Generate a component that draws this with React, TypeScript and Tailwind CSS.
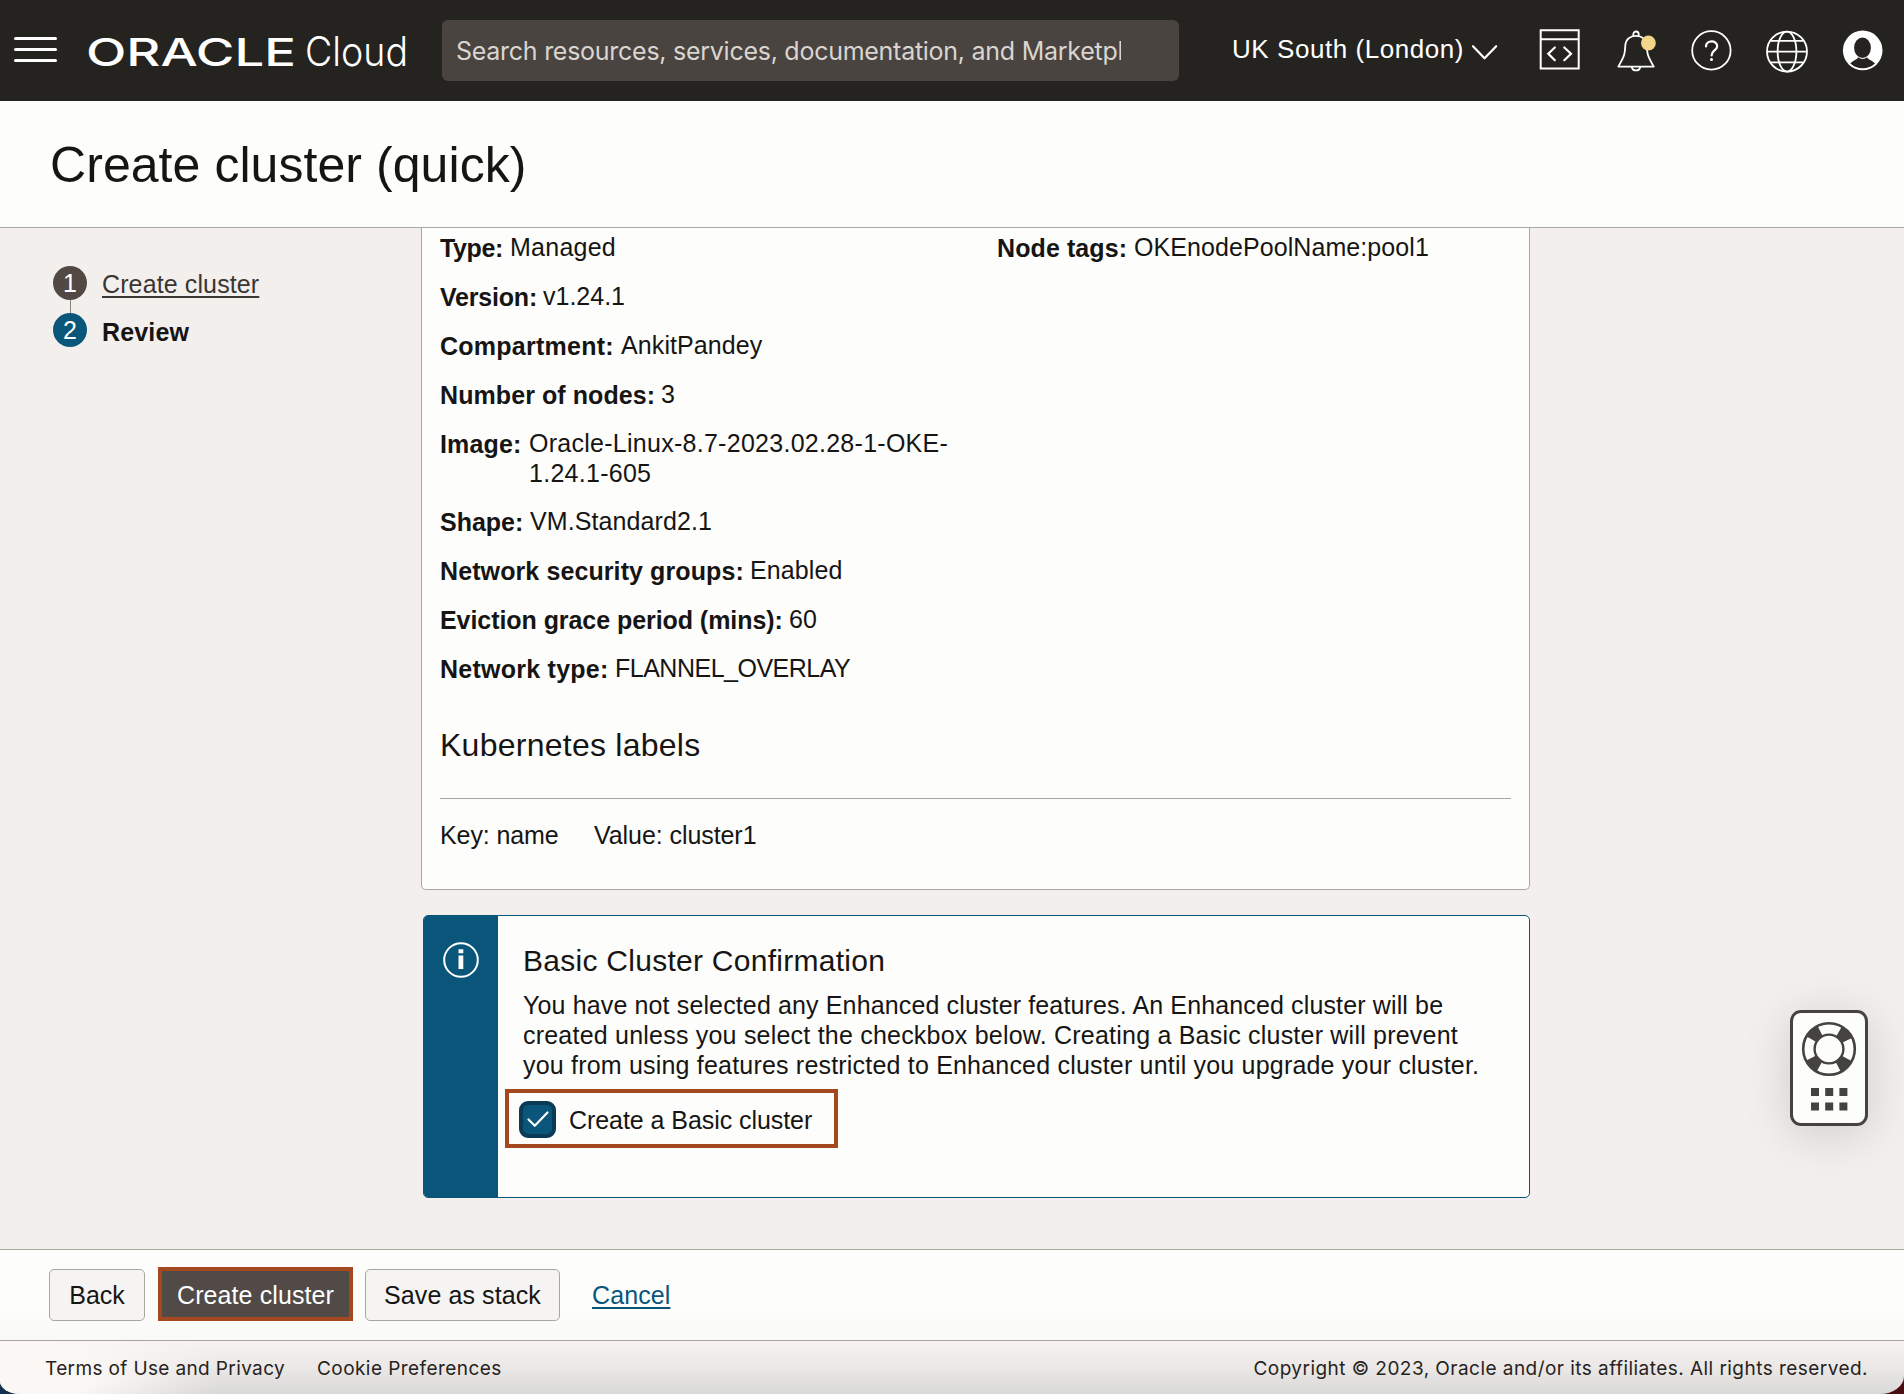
import React from 'react';

type Detail = {
  label: string;
  lines: string[];
  labelClass: string;
  valueClass: string;
};

const details: Detail[] = [
  { label: 'Type:', lines: ['Managed'], labelClass: 'w-[70px] tracking-[-0.4px]', valueClass: 'tracking-[0.25px]' },
  { label: 'Version:', lines: ['v1.24.1'], labelClass: 'w-[103px] tracking-[-0.2px]', valueClass: '' },
  { label: 'Compartment:', lines: ['AnkitPandey'], labelClass: 'w-[181px] tracking-[0.25px]', valueClass: 'tracking-[0.1px]' },
  { label: 'Number of nodes:', lines: ['3'], labelClass: 'w-[221px] tracking-[0.08px]', valueClass: '' },
  {
    label: 'Image:',
    lines: ['Oracle-Linux-8.7-2023.02.28-1-OKE-', '1.24.1-605'],
    labelClass: 'w-[89px] tracking-[0.15px]',
    valueClass: 'tracking-[0.27px]',
  },
  { label: 'Shape:', lines: ['VM.Standard2.1'], labelClass: 'w-[90px]', valueClass: 'tracking-[0.1px]' },
  { label: 'Network security groups:', lines: ['Enabled'], labelClass: 'w-[310px] tracking-[0.1px]', valueClass: 'tracking-[0.1px]' },
  { label: 'Eviction grace period (mins):', lines: ['60'], labelClass: 'w-[349px] tracking-[-0.06px]', valueClass: '' },
  { label: 'Network type:', lines: ['FLANNEL_OVERLAY'], labelClass: 'w-[175px] tracking-[0.25px]', valueClass: 'tracking-[-0.5px]' },
];

function DetailRow({ label, lines, labelClass, valueClass }: Detail) {
  return (
    <div className="mb-[18px] flex items-start whitespace-nowrap text-[25px] leading-[30px]">
      <span className={`shrink-0 pt-px font-bold ${labelClass}`}>{label}</span>
      <span className={valueClass}>
        {lines.map((line) => (
          <span key={line} className="block">
            {line}
          </span>
        ))}
      </span>
    </div>
  );
}

function Header() {
  return (
    <header className="flex h-[101px] shrink-0 items-start bg-[#24231f] text-white">
      <button className="ml-[14px] mt-[37px] flex h-[25px] w-[43px] flex-col justify-between" aria-label="Menu">
        <span className="h-[3px] w-full rounded-full bg-white" />
        <span className="h-[3px] w-full rounded-full bg-white" />
        <span className="h-[3px] w-full rounded-full bg-white" />
      </button>
      <svg className="ml-[29px] mt-[26px] h-[52px] w-[326px]" viewBox="86 26 326 52" fill="#fff">
        <text x="86" y="65.6" fontFamily="Inter, sans-serif" fontSize="38" fontWeight="500" textLength="210" lengthAdjust="spacingAndGlyphs">
          ORACLE
        </text>
        <text x="305" y="65.6" fontFamily="Inter, sans-serif" fontSize="40.5" fontWeight="300" textLength="103" lengthAdjust="spacingAndGlyphs">
          Cloud
        </text>
      </svg>
      <div className="ml-[30px] mt-5 flex h-[61px] w-[737px] items-center rounded-[6px] bg-[#494440] pl-[14px] pt-px">
        <span className="w-[665px] overflow-hidden whitespace-nowrap font-[Inter,sans-serif] text-[25px] leading-[30px] tracking-[-0.265px] text-[#d9d5d0]">
          Search resources, services, documentation, and Marketplace
        </span>
      </div>
      <div className="ml-[53px] mt-[34px] w-[233px] whitespace-nowrap text-[26px] leading-[30px] tracking-[0.55px]">UK South (London)</div>
      <svg className="ml-[3px] mt-[42px] h-5 w-[32px]" viewBox="1468 42 32 20" fill="none" stroke="#fff" strokeWidth="2.2" strokeLinecap="round" strokeLinejoin="round">
        <path d="M1473 46.2 1484.5 58.3 1496.2 46.2" />
      </svg>
      <div className="ml-9 mt-[26px] flex gap-7">
        <svg className="size-12" viewBox="1536 26 48 48" fill="none" stroke="#fff" strokeWidth="2">
          <path d="M1540.7 30.3h38v38.2h-38zM1540 39.3h39" />
          <path d="M1554.8 47.5 1548.3 53.7 1554.8 60.2M1564.3 47.5 1571 53.7 1564.3 60.2" strokeLinecap="round" strokeWidth="2.2" />
        </svg>
        <svg className="size-12" viewBox="1612 26 48 48" fill="none" stroke="#fff" strokeWidth="1.8" strokeLinejoin="round">
          <path d="M1636 35.8C1630 35.8 1625.6 39.6 1625.3 45.5C1625 53 1625 55.5 1618.3 66.6H1653.8C1647.2 55.5 1647 53 1646.8 45.5C1646.5 39.6 1642 35.8 1636 35.8Z" />
          <path d="M1633.3 36V34.2a2.7 2.7 0 0 1 5.4 0V36M1631.7 67a4.4 4.4 0 0 0 8.6 0" />
          <circle cx="1648.4" cy="43" r="7.4" fill="#f3d58a" stroke="none" />
        </svg>
        <svg className="-ml-px size-12" viewBox="1687 26 48 48" fill="none" stroke="#fff" strokeWidth="1.8" strokeLinecap="round">
          <circle cx="1711.4" cy="50.4" r="19.2" />
          <path d="M1706 46.5C1706 39.8 1717.2 39.8 1717.2 46.2C1717.2 50.3 1711.6 50.2 1711.6 55.5" strokeWidth="2.2" />
          <circle cx="1711.5" cy="59.5" r="1.5" fill="#fff" stroke="none" />
        </svg>
        <svg className="size-12" viewBox="1763 26 48 48" fill="none" stroke="#fff" strokeWidth="1.8">
          <circle cx="1787" cy="51.6" r="20" />
          <ellipse cx="1787" cy="51.6" rx="9.4" ry="20" />
          <path d="M1767 51.6h40M1770.5 40.9h33M1770.5 62.3h33" />
        </svg>
        <svg className="size-12" viewBox="1839 26 48 48">
          <circle cx="1862.7" cy="50.4" r="19.8" fill="#fff" />
          <ellipse cx="1862.5" cy="47.8" rx="8.4" ry="10.2" fill="#24231f" />
          <path d="M1850.4 63.6C1852.6 60.5 1856.6 60 1858.3 57.2C1861 59.5 1864.4 59.5 1867 57.2C1868.8 60 1872.7 60.5 1875 63.6A18.3 18.3 0 0 1 1850.4 63.6Z" fill="#24231f" />
        </svg>
      </div>
    </header>
  );
}

function Steps() {
  return (
    <nav className="flex w-[368px] shrink-0 gap-[15px] pt-[38px] text-[25px] leading-[30px]">
      <div className="flex w-[34px] flex-col items-center text-white">
        <span className="flex size-[34px] items-center justify-center rounded-full bg-[#524944]">1</span>
        <span className="h-[13px] w-px bg-[#8b8580]" />
        <span className="flex size-[34px] items-center justify-center rounded-full bg-[#0a557a]">2</span>
      </div>
      <div className="flex flex-col items-start gap-[18px] pt-[3px]">
        <a className="tracking-[0.12px] text-[#3a3632] underline decoration-2 underline-offset-[3px]">Create cluster</a>
        <span className="font-bold tracking-[0.15px]">Review</span>
      </div>
    </nav>
  );
}

function ReviewCard() {
  return (
    <section className="flex h-[662px] flex-col rounded-b-[5px] border border-t-0 border-[#aaa5a0] bg-[#fdfdfb] px-[18px] pt-1">
      <div className="flex">
        <div className="w-[557px] shrink-0">
          {details.map((row) => (
            <DetailRow key={row.label} {...row} />
          ))}
        </div>
        <DetailRow label="Node tags:" lines={['OKEnodePoolName:pool1']} labelClass="w-[137px] tracking-[0.1px]" valueClass="tracking-[0.08px]" />
      </div>
      <h2 className="mt-[23px] text-[32px] leading-10 tracking-[0.25px]">Kubernetes labels</h2>
      <div className="mt-[33px] border-t border-[#aaa5a0] pt-[21px]">
        <div className="flex text-[25px] leading-[30px]">
          <span className="w-[154px] tracking-[-0.1px]">Key: name</span>
          <span className="tracking-[-0.07px]">Value: cluster1</span>
        </div>
      </div>
    </section>
  );
}

function Confirmation() {
  return (
    <section className="ml-[2px] mt-[25px] flex h-[283px] overflow-hidden rounded-[5px] border border-[#0a557a] bg-[#fdfdfb]">
      <div className="flex w-[74px] shrink-0 justify-center bg-[#0a557a] pt-[26px]">
        <svg className="size-9" viewBox="0 0 36 36" fill="none">
          <circle cx="18" cy="18" r="16.8" stroke="#fff" strokeWidth="2" />
          <path d="M15.5 7.2h4.8v4h-4.8zM15.5 13.6h4.8v13.4h-4.8z" fill="#fff" />
        </svg>
      </div>
      <div className="flex flex-col items-start pl-[7px] pt-[27px]">
        <h2 className="pl-[18px] text-[30px] leading-9 tracking-[0.27px]">Basic Cluster Confirmation</h2>
        <p className="mt-[11px] whitespace-nowrap pl-[18px] text-[25px] leading-[30px]">
          <span className="block tracking-[0.135px]">You have not selected any Enhanced cluster features. An Enhanced cluster will be</span>
          <span className="block tracking-[0.215px]">created unless you select the checkbox below. Creating a Basic cluster will prevent</span>
          <span className="block tracking-[0.195px]">you from using features restricted to Enhanced cluster until you upgrade your cluster.</span>
        </p>
        <label className="mt-[9px] flex h-[59px] w-[333px] items-center border-4 border-[#a4491f] pl-[10px] pt-[2px]">
          <span className="flex size-[37px] items-center justify-center rounded-[9px] border-4 border-[#0b3a54] bg-[#0a557a]">
            <svg className="size-6" viewBox="0 0 24 24" fill="none" stroke="#fff" strokeWidth="2.2" strokeLinecap="round" strokeLinejoin="round">
              <path d="M2.5 11.5 8.8 17.8 21.5 4.5" />
            </svg>
          </span>
          <span className="ml-[13px] whitespace-nowrap text-[25px] leading-[30px] tracking-[-0.06px]">Create a Basic cluster</span>
        </label>
      </div>
    </section>
  );
}

function SupportWidget() {
  return (
    <aside className="absolute left-[1790px] top-[1010px] h-[116px] w-[78px] rounded-[11px] border-[3px] border-[#454340] bg-[#fdfdfb] shadow-[0_8px_48px_rgba(0,0,0,0.15)]">
      <svg className="h-[110px] w-[72px]" viewBox="1793 1013 72 110" fill="none" stroke="#454340">
        <circle cx="1829" cy="1049" r="20.5" strokeWidth="11" strokeDasharray="12.2 20" strokeDashoffset="-10" />
        <circle cx="1829" cy="1049" r="25.8" strokeWidth="2.6" />
        <circle cx="1829" cy="1049" r="14.4" strokeWidth="2.4" />
        <path
          d="M1811 1088h8v8h-8zM1825.2 1088h8v8h-8zM1839.4 1088h8v8h-8zM1811 1102.6h8v8h-8zM1825.2 1102.6h8v8h-8zM1839.4 1102.6h8v8h-8z"
          fill="#454340"
          stroke="none"
        />
      </svg>
    </aside>
  );
}

function ActionBar() {
  return (
    <div className="flex h-[91px] shrink-0 items-start border-t border-[#a8a59c] bg-linear-to-b from-[#fdfefc] from-60% to-[#f9f9f7] pl-[49px] text-[25px] leading-[30px]">
      <button className="mt-[19px] h-[52px] w-24 rounded-[5px] border border-[#aaa5a0] bg-[#f5f4f2]">Back</button>
      <button className="ml-[13px] mt-[17px] h-[54px] w-[195px] border-4 border-[#a4491f] bg-[#524a46] pt-[2px] tracking-[0.1px] text-white">Create cluster</button>
      <button className="ml-3 mt-[19px] h-[52px] w-[195px] rounded-[5px] border border-[#aaa5a0] bg-[#f5f4f2] tracking-[0.1px]">Save as stack</button>
      <a className="ml-8 mt-[30px] tracking-[0.1px] text-[#0a557a] underline decoration-2 underline-offset-[3px]">Cancel</a>
    </div>
  );
}

function Footer() {
  return (
    <div className="h-[54px] shrink-0 bg-linear-to-r from-[#12304d] from-50% to-[#4a0d12] to-50%">
      <footer className="h-full rounded-bl-[20px_13px] rounded-br-[24px_18px] border-t border-[#a8a59c] bg-[radial-gradient(ellipse_220px_90px_at_0%_60%,#fbf7f5_40%,rgba(251,247,245,0)_100%),linear-gradient(to_bottom,#f6f2f0,#ebe8e7_50%,#d9d9d8)] pl-[45px] pr-[36px] pt-4">
        <div className="flex whitespace-nowrap font-[Inter,sans-serif] text-[19px] leading-6 text-[#262320]">
          <span className="w-[272px] tracking-[0.37px]">Terms of Use and Privacy</span>
          <span className="tracking-[0.44px]">Cookie Preferences</span>
          <span className="ml-auto tracking-[0.455px]">Copyright © 2023, Oracle and/or its affiliates. All rights reserved.</span>
        </div>
      </footer>
    </div>
  );
}

export default function App() {
  return (
    <div className="relative flex h-[1394px] w-[1904px] flex-col overflow-hidden bg-[#f3efec] font-['Liberation_Sans',Arial,sans-serif] text-[#161513]">
      <Header />
      <div className="flex h-[127px] shrink-0 items-center border-b border-[#aba7a3] bg-[#fdfefc] pl-[50px] pt-[2px]">
        <h1 className="text-[50px] leading-[60px] tracking-[0.06px]">Create cluster (quick)</h1>
      </div>
      <main className="flex grow items-start pl-[53px]">
        <Steps />
        <div className="w-[1109px]">
          <ReviewCard />
          <Confirmation />
        </div>
      </main>
      <ActionBar />
      <Footer />
      <SupportWidget />
    </div>
  );
}
